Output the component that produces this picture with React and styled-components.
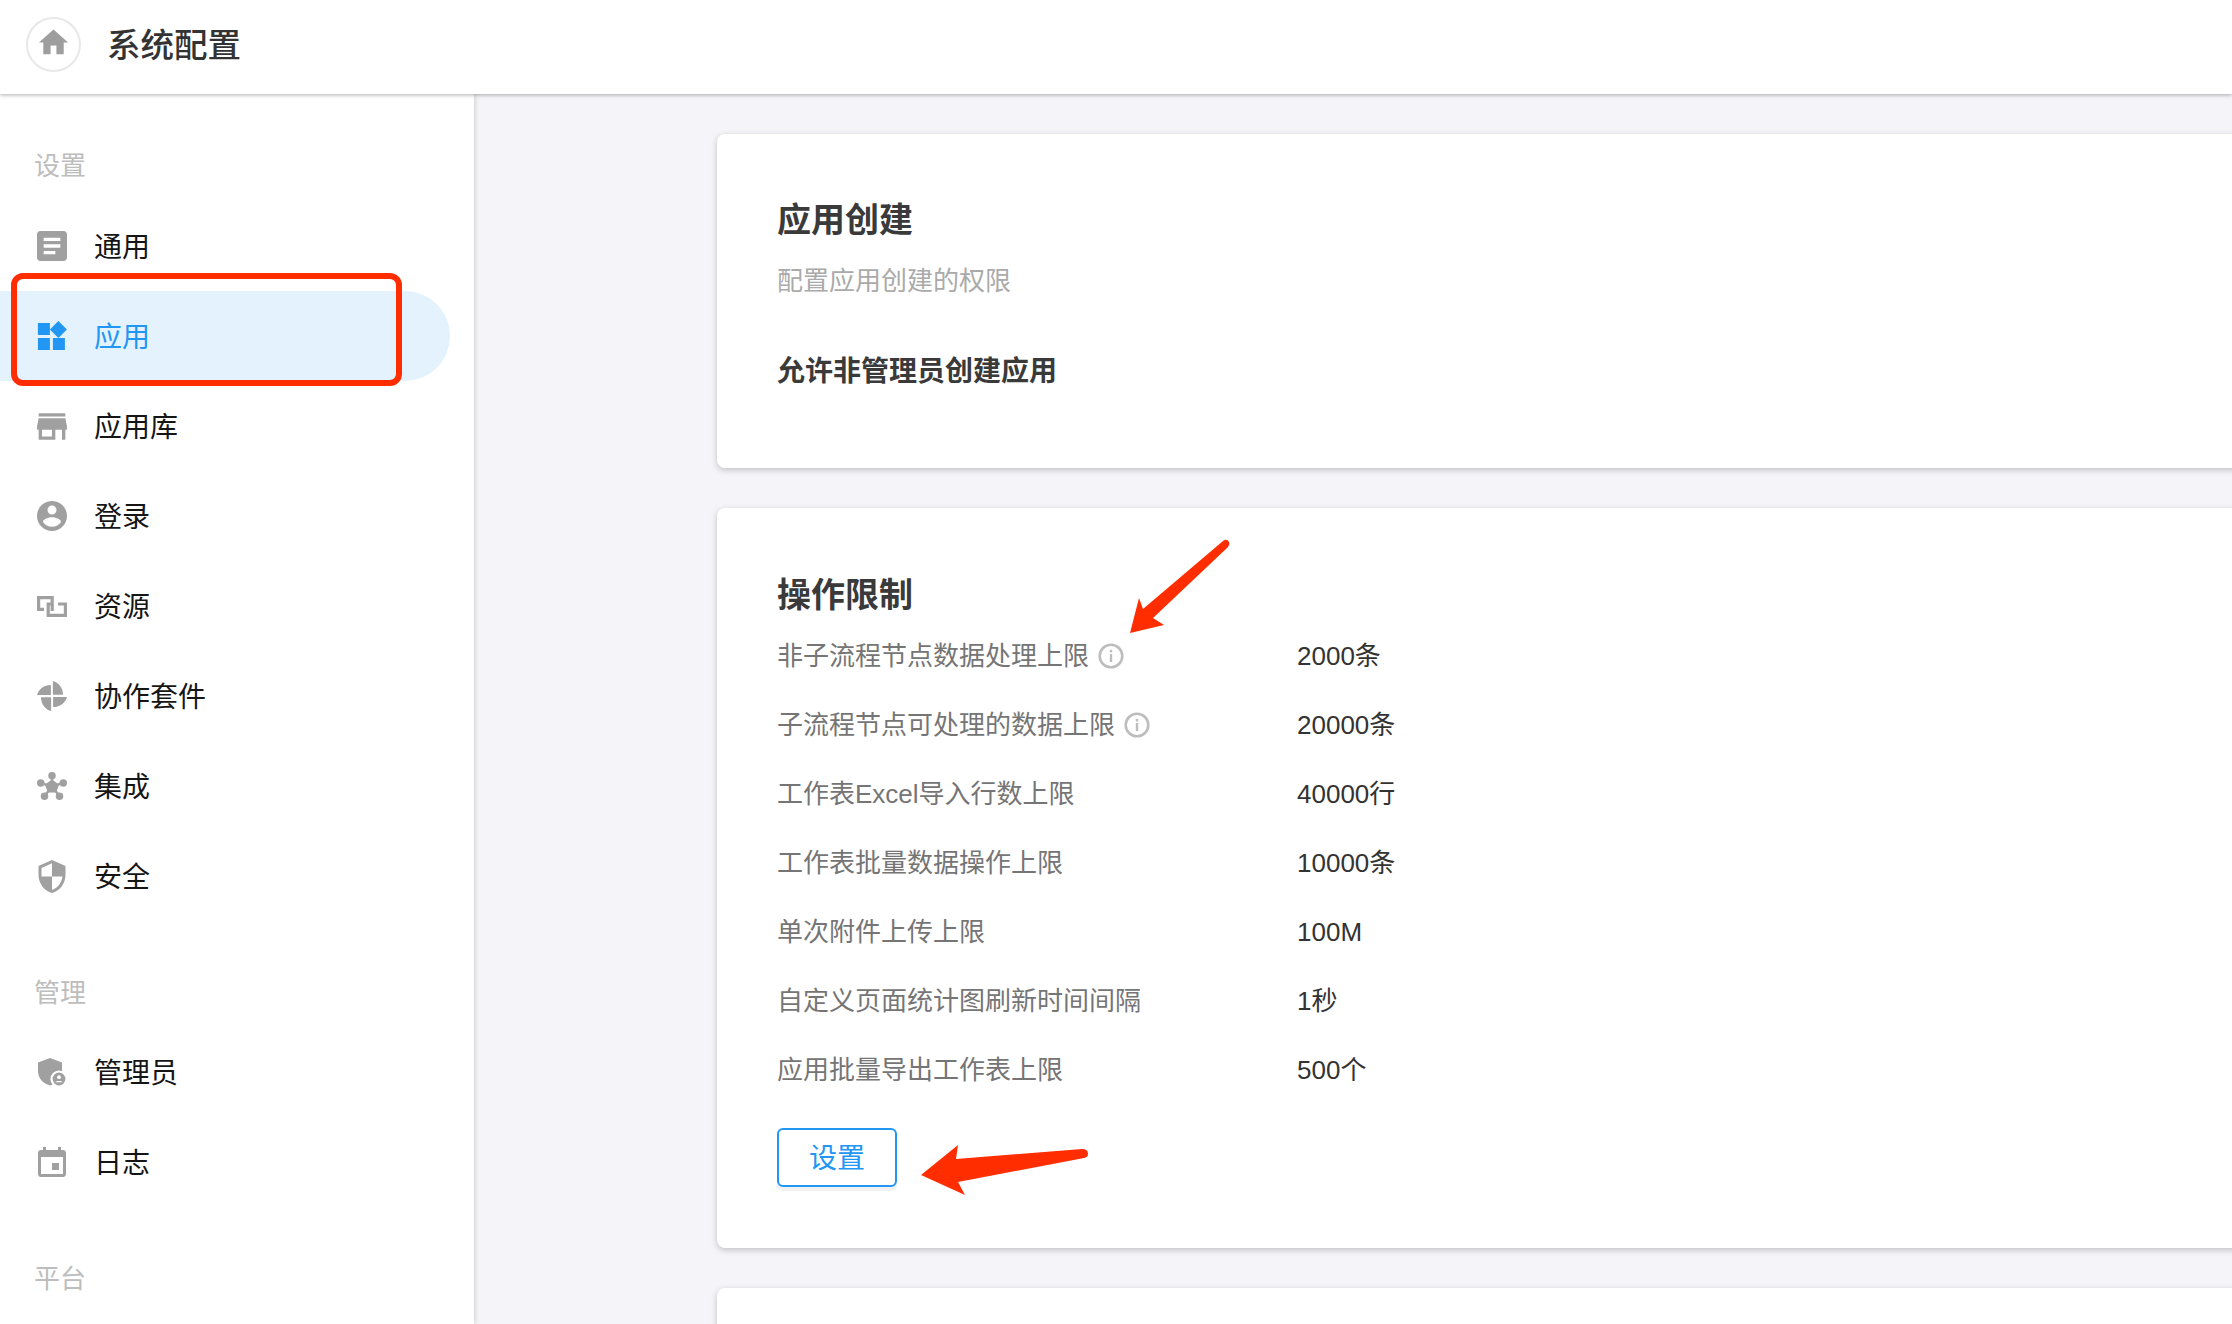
import React from "react";
import styled, { createGlobalStyle } from "styled-components";

const Global = createGlobalStyle`
  html, body { margin: 0; padding: 0; height: 100%; overflow: hidden; background: #f5f5f9; }
  body { font-family: "Liberation Sans", "Noto Sans CJK SC", sans-serif; }
  * { box-sizing: border-box; }
`;
const Page = styled.div`position: relative; width: 2232px; height: 1324px; overflow: hidden; background: #f5f5f9;`;
const Header = styled.header`
  position: relative; z-index: 2; display: flex; align-items: center; gap: 26px;
  height: 94px; padding-left: 26px; background: #fff; box-shadow: 0 1px 4px rgba(0,0,0,.32);
`;
const HomeButton = styled.div`
  width: 55px; height: 55px; border-radius: 50%; border: 2px solid #e8e8e8;
  display: flex; align-items: center; justify-content: center; margin-top: -6px;
`;
const HomeIcon = styled.svg`margin-top: -3px;`;
const Title = styled.h1`margin: -2px 0 0; font-size: 33.5px; line-height: 44px; font-weight: 500; color: #333;`;
const Body = styled.div`display: flex; height: 1230px;`;
const Sidebar = styled.aside`
  flex: 0 0 474px; background: #fff; padding-top: 54px; box-shadow: 1px 0 5px rgba(0,0,0,.16); z-index: 1;
`;
const Group = styled.section`margin-bottom: 54px;`;
const GroupLabel = styled.div`
  height: 36px; line-height: 36px; padding-left: 34px; margin-bottom: 16px; font-size: 26px; color: #bdbdbd;
  section:first-child > & { margin-bottom: 17px; }
`;
const NavItem = styled.div`
  display: flex; align-items: center; gap: 27px; width: 450px; height: 90px; padding-left: 37px;
  border-radius: 0 45px 45px 0; font-size: 28px; line-height: 40px; color: ${p => (p.$active ? "#2196f3" : "#151515")};
  background: ${p => (p.$active ? "#e3f2fd" : "transparent")};
`;
const NavLabel = styled.span`padding-top: 3px;`;
const IconBox = styled.span`flex: 0 0 30px; width: 30px; height: 36px; display: flex; align-items: center; justify-content: center;`;
const Main = styled.main`flex: 1; min-width: 0; padding: 40px 0 0 243px;`;
const Card = styled.section`
  width: 1700px; margin-bottom: 40px; border-radius: 8px; background: #fff;
  box-shadow: 0 2px 6px rgba(0,0,0,.22); padding: ${p => p.$pad};
`;
const CardTitle = styled.h2`margin: 0; font-size: 34px; line-height: 40px; font-weight: 700; color: #3a3a3a;`;
const Desc = styled.p`margin: 23px 0 53px; font-size: 26px; line-height: 36px; color: #aaa;`;
const Option = styled.div`font-size: 28px; line-height: 40px; font-weight: 700; color: #3a3a3a;`;
const Rows = styled.div`margin-top: 6px; margin-bottom: 24px;`;
const Row = styled.div`display: grid; grid-template-columns: 520px 1fr; align-items: center; height: 69px; font-size: 26px; line-height: 36px;`;
const RowLabel = styled.div`display: flex; align-items: center; gap: 9px; color: #757575;`;
const RowValue = styled.div`color: #333;`;
const OutlineButton = styled.button`
  display: block; width: 120px; height: 59px; padding: 2px 0 0; border: 2px solid #2196f3; border-radius: 6px;
  background: #fff; color: #2196f3; font: inherit; font-size: 28px; line-height: 40px; box-shadow: 0 4px 0 #f2f2f2;
`;
const RedFrame = styled.div`
  position: absolute; left: 11px; top: 273px; width: 391px; height: 113px; z-index: 3;
  border: 6px solid #ff2d00; border-radius: 12px;
`;
const ArrowLayer = styled.svg`position: absolute; inset: 0; z-index: 3; pointer-events: none;`;

const Glyph = ({ vb = "0 0 24 24", w = 30, h = 30, fill = "#a0a0a0", children }) => (
  <svg width={w} height={h} viewBox={vb} fill={fill}>{children}</svg>
);
const icons = {
  article: <Glyph vb="3 3 18 18"><path d="M19 3H5c-1.1 0-2 .9-2 2v14c0 1.1.9 2 2 2h14c1.1 0 2-.9 2-2V5c0-1.1-.9-2-2-2zm-5 14H7v-2h7v2zm3-4H7v-2h10v2zm0-4H7V7h10v2z" /></Glyph>,
  widgets: <Glyph vb="2.4 1.7 20 20" fill="#2196f3"><path d="M13 13v8h8v-8h-8zM3 21h8v-8H3v8zM3 3v8h8V3H3zm13.66-1.31L11 7.34 16.66 13l5.66-5.66-5.66-5.65z" /></Glyph>,
  store: <Glyph vb="3 4 18 16" w={30} h={27}><path d="M20 4H4v2h16V4zm1 10v-2l-1-5H4l-1 5v2h1v6h10v-6h4v6h2v-6h1zm-9 4H6v-4h6v4z" /></Glyph>,
  account: <Glyph vb="2 2 20 20"><path d="M12 2C6.48 2 2 6.48 2 12s4.48 10 10 10 10-4.48 10-10S17.52 2 12 2zm0 3c1.66 0 3 1.34 3 3s-1.34 3-3 3-3-1.34-3-3 1.34-3 3-3zm0 14.2c-2.5 0-4.71-1.28-6-3.22.03-1.99 4-3.08 6-3.08 1.99 0 5.97 1.09 6 3.08-1.29 1.94-3.5 3.22-6 3.22z" /></Glyph>,
  resource: <Glyph vb="0 0 30 21" w={30} h={21} fill="none"><g stroke="#a0a0a0" strokeWidth="3.2"><path d="M7 13.4H1.6V1.6H15.2V15" /><path d="M15 8H11.2V19.4H28.4V8H21" /></g></Glyph>,
  pinwheel: <Glyph vb="0 0 34 34" w={34} h={34}>{[0, 90, 180, 270].map(r => <path key={r} transform={`rotate(${r} 17 17)`} d="M18 15.7V0C24 1.5 29.5 7.5 29.5 15.7Z" />)}</Glyph>,
  hub: <Glyph vb="0 0 32 30" w={32} h={30}><g stroke="#a0a0a0" strokeWidth="2.6"><path d="M16 15.7L16 4M16 15.7L4 11.7M16 15.7L27.5 11.7M16 15.7L8 25.7M16 15.7L24 25.7" /></g><circle cx="16" cy="4" r="4" /><circle cx="4" cy="11.7" r="4" /><circle cx="28" cy="11.7" r="4" /><circle cx="8" cy="25.9" r="4" /><circle cx="24" cy="25.9" r="4" /><path d="M16 8L23.4 13.4L20.6 22H11.4L8.6 13.4Z" /></Glyph>,
  shield: <Glyph vb="3 1 18 22" w={28} h={33}><path d="M12 1L3 5v6c0 5.55 3.84 10.74 9 12 5.16-1.26 9-6.45 9-12V5l-9-4zm0 10.99h7c-.53 4.12-3.28 7.79-7 8.94V12H5V6.3l7-3.11v8.8z" /></Glyph>,
  admin: <Glyph vb="0 0 28 28" w={28} h={28}><path d="M12 0L0 4.6V13C0 20 5 25.5 12 27.5C13 27.2 14 26.8 15 26.3L24 13V4.6Z" /><circle cx="21" cy="21" r="8.6" fill="#fff" /><circle cx="21" cy="21" r="6.4" /><circle cx="21" cy="19.2" r="1.9" fill="#fff" /><path d="M17.4 24.2C18 22.6 24 22.6 24.6 24.2Z" fill="#fff" /></Glyph>,
  calendar: <Glyph vb="0 0 28 30" w={28} h={30}><path d="M5 0h3v3h12V0h3v3h2c1.7 0 3 1.3 3 3v21c0 1.7-1.3 3-3 3H3c-1.7 0-3-1.3-3-3V6c0-1.7 1.3-3 3-3h2zM3 10v17h22V10z" /><rect x="14" y="16" width="7" height="7" /></Glyph>,
};
const Info = () => (
  <svg width="26" height="26" viewBox="0 0 26 26" fill="none">
    <circle cx="13" cy="13" r="11.3" stroke="#bdbdbd" strokeWidth="2.6" />
    <rect x="11.8" y="11" width="2.4" height="8" fill="#bdbdbd" />
    <rect x="11.8" y="6.8" width="2.4" height="2.6" fill="#bdbdbd" />
  </svg>
);

const settings = [["通用", "article"], ["应用", "widgets", true], ["应用库", "store"], ["登录", "account"], ["资源", "resource"], ["协作套件", "pinwheel"], ["集成", "hub"], ["安全", "shield"]];
const manage = [["管理员", "admin"], ["日志", "calendar"]];
const limits = [
  ["非子流程节点数据处理上限", "2000条", true],
  ["子流程节点可处理的数据上限", "20000条", true],
  ["工作表Excel导入行数上限", "40000行"],
  ["工作表批量数据操作上限", "10000条"],
  ["单次附件上传上限", "100M"],
  ["自定义页面统计图刷新时间间隔", "1秒"],
  ["应用批量导出工作表上限", "500个"],
];
const renderNav = list => list.map(([label, icon, active]) => (
  <NavItem key={label} $active={active}><IconBox>{icons[icon]}</IconBox><NavLabel>{label}</NavLabel></NavItem>
));

export default function App() {
  return (
    <Page>
      <Global />
      <Header>
        <HomeButton>
          <HomeIcon width="35" height="35" viewBox="0 0 24 24" fill="#9e9e9e"><path d="M10 20v-6h4v6h5v-8h3L12 3 2 12h3v8z" /></HomeIcon>
        </HomeButton>
        <Title>系统配置</Title>
      </Header>
      <Body>
        <Sidebar>
          <Group><GroupLabel>设置</GroupLabel>{renderNav(settings)}</Group>
          <Group><GroupLabel>管理</GroupLabel>{renderNav(manage)}</Group>
          <Group><GroupLabel>平台</GroupLabel></Group>
        </Sidebar>
        <Main>
          <Card $pad="66px 60px 76px">
            <CardTitle>应用创建</CardTitle>
            <Desc>配置应用创建的权限</Desc>
            <Option>允许非管理员创建应用</Option>
          </Card>
          <Card $pad="67px 60px 61px">
            <CardTitle>操作限制</CardTitle>
            <Rows>
              {limits.map(([label, value, info]) => (
                <Row key={label}>
                  <RowLabel>{label}{info && <Info />}</RowLabel>
                  <RowValue>{value}</RowValue>
                </Row>
              ))}
            </Rows>
            <OutlineButton>设置</OutlineButton>
          </Card>
          <Card $pad="60px" />
        </Main>
      </Body>
      <RedFrame />
      <ArrowLayer width="2232" height="1324" viewBox="0 0 2232 1324" fill="#ff2d00">
        <path d="M1130 633L1139 598L1143 609L1223 541Q1227 538 1229 542Q1230 545 1227 548L1153 618L1164 625Z" />
        <path d="M921 1175L958 1145L956 1159L1082 1149Q1088 1149 1088 1154Q1088 1157 1084 1158L958 1182L965 1195Z" />
      </ArrowLayer>
    </Page>
  );
}
